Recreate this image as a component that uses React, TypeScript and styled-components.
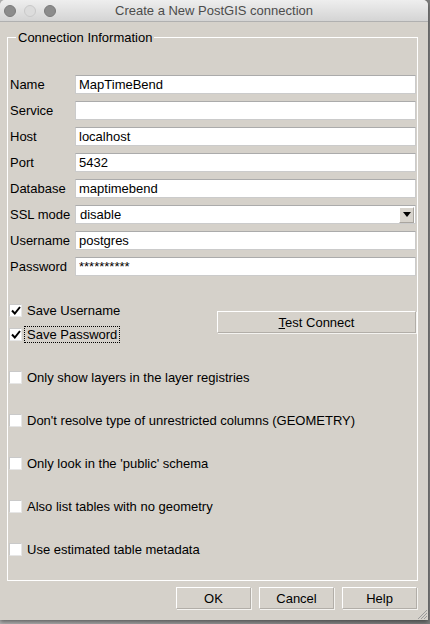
import React from "react";
import styled, { createGlobalStyle } from "styled-components";

const GlobalStyle = createGlobalStyle`
  html, body { margin: 0; padding: 0; }
  body {
    width: 430px;
    height: 624px;
    overflow: hidden;
    background: #8f8f8f;
    font-family: "Liberation Sans", Arial, sans-serif;
    font-size: 13px;
    color: #000;
  }
  * { box-sizing: border-box; }
`;

const Screen = styled.div`
  width: 430px;
  height: 624px;
  display: flex;
  align-items: flex-start;
  background: linear-gradient(90deg, #b4b4b4 0%, #7d7d7d 100%);
`;

const Window = styled.div`
  position: relative;
  width: 428px;
  height: 620px;
  display: flex;
  flex-direction: column;
  background: #d5d1ca;
  border-radius: 5px 5px 0 0;
  box-shadow: 0 2px 4px rgba(0, 0, 0, 0.45);
  overflow: hidden;
`;

const TitleBar = styled.div`
  flex: none;
  height: 22px;
  display: grid;
  grid-template-columns: 1fr auto 1fr;
  align-items: center;
  background: linear-gradient(#eeeeee, #d4d4d4);
  border-bottom: 1px solid #b0b0b0;
`;

const Lights = styled.div`
  display: flex;
  gap: 8px;
  padding-left: 4px;
`;

const Light = styled.span<{ $dim?: boolean }>`
  width: 12px;
  height: 12px;
  border-radius: 50%;
  background: ${(p) => (p.$dim ? "#dcdcdc" : "#8c8c8c")};
  border: 1px solid ${(p) => (p.$dim ? "#c8c8c8" : "#7a7a7a")};
`;

const Title = styled.div`
  font-size: 13px;
  color: #4c4c4c;
  white-space: nowrap;
`;

const Body = styled.div`
  flex: 1;
  display: flex;
  flex-direction: column;
  padding: 8px 10px 0 7px;
`;

const Group = styled.fieldset`
  margin: 0;
  padding: 30px 1px 21px 1px;
  border: 1px solid #ffffff;
  min-width: 0;
`;

const Legend = styled.legend`
  margin-left: 7px;
  padding: 0 2px;
  font-size: 13px;
  line-height: 15px;
`;

const FormGrid = styled.div`
  display: grid;
  grid-template-columns: 66px 1fr;
  row-gap: 7px;
  align-items: center;
`;

const Label = styled.label`
  padding-left: 1px;
  line-height: 19px;
  white-space: nowrap;
`;

const TextInput = styled.input`
  height: 19px;
  width: 100%;
  margin: 0;
  padding: 0 3px;
  font-family: "Liberation Sans", Arial, sans-serif;
  font-size: 13px;
  color: #000;
  background: #fff;
  border: 1px solid #cbcbcb;
  border-top-color: #ababab;
  outline: none;
`;

const Combo = styled.div`
  height: 19px;
  display: flex;
  align-items: center;
  justify-content: space-between;
  padding: 0 1px 0 4px;
  background: #fff;
  border: 1px solid #cbcbcb;
  border-top-color: #ababab;
`;

const ComboValue = styled.span`
  line-height: 17px;
`;

const ArrowButton = styled.span`
  width: 15px;
  height: 16px;
  display: flex;
  align-items: center;
  justify-content: center;
  background: #d8d4cd;
  border: 1px solid #ffffff;
  border-right-color: #a9a59f;
  border-bottom-color: #a9a59f;
`;

const Options = styled.div`
  display: grid;
  grid-template-columns: 1fr 199px;
  column-gap: 8px;
  margin-top: 24px;
  align-items: center;
`;

const CheckColumn = styled.div`
  display: flex;
  flex-direction: column;
  gap: 4px;
`;

const CheckRow = styled.div`
  height: 20px;
  display: flex;
  align-items: center;
  gap: 2px;
`;

const Box = styled.span`
  flex: none;
  width: 13px;
  height: 13px;
  display: flex;
  align-items: center;
  justify-content: center;
  background: #fff;
  border: 1px solid #c9c9c9;
  border-right-color: #e6e6e6;
  border-bottom-color: #e6e6e6;
`;

const CheckText = styled.span<{ $focused?: boolean }>`
  padding: 0 2px;
  line-height: 15px;
  white-space: nowrap;
  border: 1px ${(p) => (p.$focused ? "dotted #000" : "solid transparent")};
`;

const PushButton = styled.button<{ $w?: number }>`
  height: 22px;
  width: ${(p) => (p.$w ? `${p.$w}px` : "100%")};
  margin: 0;
  padding: 0;
  font-family: "Liberation Sans", Arial, sans-serif;
  font-size: 13px;
  color: #000;
  background: #d6d2cb;
  border: 1px solid #ffffff;
  border-right-color: #b2aea8;
  border-bottom-color: #b2aea8;
  box-shadow: 1px 1px 0 #f4f3f0;
`;

const OptionList = styled.div`
  display: flex;
  flex-direction: column;
  gap: 23px;
  margin-top: 23px;
`;

const Footer = styled.div`
  display: flex;
  justify-content: flex-end;
  gap: 8px;
  margin-top: 6px;
  padding-right: 1px;
`;

const Grip = styled.svg`
  position: absolute;
  right: 1px;
  bottom: 1px;
`;

const Check = () => (
  <svg width="10" height="9" viewBox="0 0 10 9">
    <path d="M1 4.5 L3.8 7.5 L9 1" fill="none" stroke="#000" strokeWidth="2" />
  </svg>
);

const CheckItem = ({ label, checked, focused }: { label: string; checked?: boolean; focused?: boolean }) => (
  <CheckRow>
    <Box>{checked && <Check />}</Box>
    <CheckText $focused={focused}>{label}</CheckText>
  </CheckRow>
);

const fields: [string, string][] = [
  ["Name", "MapTimeBend"],
  ["Service", ""],
  ["Host", "localhost"],
  ["Port", "5432"],
  ["Database", "maptimebend"],
];

const fields2: [string, string][] = [
  ["Username", "postgres"],
  ["Password", "**********"],
];

export default function App() {
  return (
    <>
      <GlobalStyle />
      <Screen>
        <Window>
          <TitleBar>
            <Lights>
              <Light />
              <Light $dim />
              <Light />
            </Lights>
            <Title>Create a New PostGIS connection</Title>
            <span />
          </TitleBar>
          <Body>
            <Group>
              <Legend>Connection Information</Legend>
              <FormGrid>
                {fields.map(([l, v]) => (
                  <React.Fragment key={l}>
                    <Label>{l}</Label>
                    <TextInput readOnly value={v} />
                  </React.Fragment>
                ))}
                <Label>SSL mode</Label>
                <Combo>
                  <ComboValue>disable</ComboValue>
                  <ArrowButton>
                    <svg width="8" height="5" viewBox="0 0 8 5">
                      <path d="M0 0 H8 L4 5 Z" fill="#000" />
                    </svg>
                  </ArrowButton>
                </Combo>
                {fields2.map(([l, v]) => (
                  <React.Fragment key={l}>
                    <Label>{l}</Label>
                    <TextInput readOnly value={v} />
                  </React.Fragment>
                ))}
              </FormGrid>
              <Options>
                <CheckColumn>
                  <CheckItem label="Save Username" checked />
                  <CheckItem label="Save Password" checked focused />
                </CheckColumn>
                <PushButton>
                  <u>T</u>est Connect
                </PushButton>
              </Options>
              <OptionList>
                <CheckItem label="Only show layers in the layer registries" />
                <CheckItem label="Don't resolve type of unrestricted columns (GEOMETRY)" />
                <CheckItem label="Only look in the 'public' schema" />
                <CheckItem label="Also list tables with no geometry" />
                <CheckItem label="Use estimated table metadata" />
              </OptionList>
            </Group>
            <Footer>
              <PushButton $w={75}>OK</PushButton>
              <PushButton $w={75}>Cancel</PushButton>
              <PushButton $w={75}>Help</PushButton>
            </Footer>
          </Body>
          <Grip width="10" height="10" viewBox="0 0 10 10">
            <path d="M1 10 L10 1 M4 10 L10 4 M7 10 L10 7" stroke="#9a9a9a" strokeWidth="1" />
          </Grip>
        </Window>
      </Screen>
    </>
  );
}
